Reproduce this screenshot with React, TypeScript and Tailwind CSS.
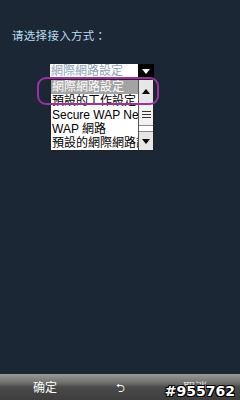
import React from "react";

const rows = ["網際網路設定", "預設的工作設定", "Secure WAP Network", "WAP 網路", "預設的網際網路設定"];

const App = () => {
  return (
    <div
      className="w-[240px] h-[400px] bg-[#1b2734] flex flex-col overflow-hidden"
      style={{ fontFamily: '"Liberation Sans", "Noto Sans CJK TC", sans-serif' }}
    >
      <div className="pl-[12px] pt-[28px] h-[64px] text-[11.5px] leading-[14px] tracking-[0.3px] text-[#b9dcf2]"
        style={{ fontFamily: '"Noto Sans CJK SC", sans-serif' }}>
        请选择接入方式<span style={{ fontFamily: '"Noto Sans CJK TC", sans-serif' }}>：</span>
      </div>

      <div className="relative ml-[50px] w-[104px]">
        {/* dropdown */}
        <div className="flex h-[14px]">
          <div className="w-[88px] bg-white text-[12px] leading-[14px] text-[#8ea2b8] pl-[1px] overflow-hidden whitespace-nowrap">
            網際網路設定
          </div>
          <div className="flex-1 bg-black flex items-center justify-center">
            <svg width="8" height="5" viewBox="0 0 8 5">
              <path d="M0 0 H8 L4 5 Z" fill="#fff" />
            </svg>
          </div>
        </div>

        {/* list */}
        <div className="mt-[1px] flex h-[72px] bg-white border border-[#222]">
          <div className="w-[87px] flex flex-col overflow-hidden">
            {rows.map((r, i) => (
              <div
                key={r}
                className={
                  "h-[14px] text-[12px] leading-[14px] whitespace-nowrap pl-[1px] " +
                  (i === 0 ? "bg-[#a3a3a3] text-white" : "text-black")
                }
              >
                {r}
              </div>
            ))}
          </div>
          <div className="flex-1 flex flex-col bg-white border-l border-[#555]">
            <div className="h-[24px] bg-[#e6e6e6] border-b border-[#888] flex items-center justify-center">
              <svg width="8" height="5" viewBox="0 0 8 5">
                <path d="M4 0 L8 5 H0 Z" fill="#000" />
              </svg>
            </div>
            <div className="h-[22px] bg-[#f2f2f2] border-b border-[#888] flex flex-col items-center justify-center gap-[2px]">
              <div className="w-[9px] h-[1px] bg-[#333]" />
              <div className="w-[9px] h-[1px] bg-[#333]" />
              <div className="w-[9px] h-[1px] bg-[#333]" />
            </div>
            <div className="h-[6px] bg-white border-b border-[#888]" />
            <div className="flex-1 bg-[#e6e6e6] flex items-center justify-center">
              <svg width="8" height="5" viewBox="0 0 8 5">
                <path d="M0 0 H8 L4 5 Z" fill="#000" />
              </svg>
            </div>
          </div>
        </div>

        {/* focus ring */}
        <div className="absolute left-[-13px] top-[13px] w-[122px] h-[28px] border-2 border-[#a0309f] rounded-[9px]" />
      </div>

      <div className="flex-1" />

      <div className="relative h-[26px] flex items-center text-white text-[12px] bg-[linear-gradient(#9a9a9a,#6e6e6e_35%,#4a4a4a_50%,#3e3e3e)]"
        style={{ fontFamily: '"Noto Sans CJK SC", sans-serif' }}>
        <div className="w-[80px] pl-[33px]">确定</div>
        <div className="flex-1 flex justify-center text-[11px]">⮌</div>
        <div className="w-[80px] pl-[23px] text-[#ddd]">取消</div>
        <div
          className="absolute right-[5px] bottom-[2px] text-[14px] leading-[14px] font-bold text-white"
          style={{ fontFamily: '"DejaVu Sans", sans-serif', textShadow: "1px 1px 0 #000, -1px -1px 0 #000, 1px -1px 0 #000, -1px 1px 0 #000" }}
        >
          #955762
        </div>
      </div>
    </div>
  );
};

export default App;
